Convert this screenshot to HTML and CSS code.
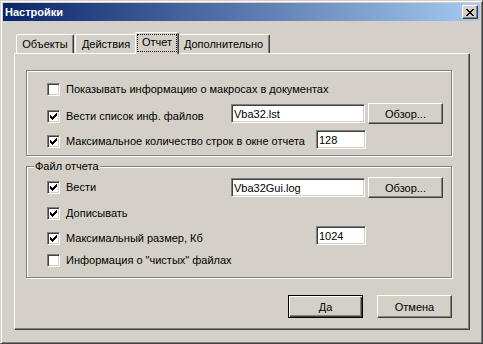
FILE: index.html
```html
<!DOCTYPE html>
<html lang="ru">
<head>
    <meta charset="UTF-8">
    <title>Настройки</title>
    <link rel="stylesheet" href="styles.css">
</head>
<body>
    <div class="window">
        <div class="titlebar">
            <span class="title">Настройки</span>
            <button class="close">
                <svg width="8" height="7" viewBox="0 0 8 7" shape-rendering="crispEdges">
                    <path d="M0 0h2v1H0zM6 0h2v1H6zM1 1h2v1H1zM5 1h2v1H5zM2 2h4v1H2zM3 3h2v1H3zM2 4h4v1H2zM1 5h2v1H1zM5 5h2v1H5zM0 6h2v1H0zM6 6h2v1H6z" fill="#000"/>
                </svg>
            </button>
        </div>

        <div class="client">
            <div class="tabs">
                <div class="tab tab-objects">Объекты</div>
                <div class="tab tab-actions">Действия</div>
                <div class="tab tab-active"><span class="focus">Отчет</span></div>
                <div class="tab tab-extra">Дополнительно</div>
            </div>

            <div class="panel">
                <!-- Общие настройки отчета -->
                <div class="group group-main">
                    <div class="row">
                        <label class="check-label">
                            <span class="check"></span>
                            Показывать информацию о макросах в документах
                        </label>
                    </div>
                    <div class="row row-field">
                        <label class="check-label label-file">
                            <span class="check"><svg width="7" height="7" viewBox="0 0 7 7" shape-rendering="crispEdges"><path d="M0 2h1v3H0zM1 3h1v3H1zM2 4h1v3H2zM3 3h1v3H3zM4 2h1v3H4zM5 1h1v3H5zM6 0h1v3H6z" fill="#000"/></svg></span>
                            Вести список инф. файлов
                        </label>
                        <input class="edit edit-file" type="text" value="Vba32.lst">
                        <button class="btn">Обзор...</button>
                    </div>
                    <div class="row row-number">
                        <label class="check-label label-number">
                            <span class="check"><svg width="7" height="7" viewBox="0 0 7 7" shape-rendering="crispEdges"><path d="M0 2h1v3H0zM1 3h1v3H1zM2 4h1v3H2zM3 3h1v3H3zM4 2h1v3H4zM5 1h1v3H5zM6 0h1v3H6z" fill="#000"/></svg></span>
                            Максимальное количество строк в окне отчета
                        </label>
                        <input class="edit edit-number" type="text" value="128">
                    </div>
                </div>

                <!-- Файл отчета -->
                <div class="group group-log">
                    <span class="group-title">Файл отчета</span>
                    <div class="row row-field">
                        <label class="check-label label-file">
                            <span class="check"><svg width="7" height="7" viewBox="0 0 7 7" shape-rendering="crispEdges"><path d="M0 2h1v3H0zM1 3h1v3H1zM2 4h1v3H2zM3 3h1v3H3zM4 2h1v3H4zM5 1h1v3H5zM6 0h1v3H6z" fill="#000"/></svg></span>
                            Вести
                        </label>
                        <input class="edit edit-file" type="text" value="Vba32Gui.log">
                        <button class="btn">Обзор...</button>
                    </div>
                    <div class="row row-plain">
                        <label class="check-label">
                            <span class="check"><svg width="7" height="7" viewBox="0 0 7 7" shape-rendering="crispEdges"><path d="M0 2h1v3H0zM1 3h1v3H1zM2 4h1v3H2zM3 3h1v3H3zM4 2h1v3H4zM5 1h1v3H5zM6 0h1v3H6z" fill="#000"/></svg></span>
                            Дописывать
                        </label>
                    </div>
                    <div class="row row-number">
                        <label class="check-label label-number">
                            <span class="check"><svg width="7" height="7" viewBox="0 0 7 7" shape-rendering="crispEdges"><path d="M0 2h1v3H0zM1 3h1v3H1zM2 4h1v3H2zM3 3h1v3H3zM4 2h1v3H4zM5 1h1v3H5zM6 0h1v3H6z" fill="#000"/></svg></span>
                            Максимальный размер, Кб
                        </label>
                        <input class="edit edit-number" type="text" value="1024">
                    </div>
                    <div class="row row-plain">
                        <label class="check-label">
                            <span class="check"></span>
                            Информация о "чистых" файлах
                        </label>
                    </div>
                </div>

                <div class="actions">
                    <button class="btn btn-default">Да</button>
                    <button class="btn">Отмена</button>
                </div>
            </div>
        </div>
    </div>
</body>
</html>
```

FILE: styles.css
```css
* {
    margin: 0;
    padding: 0;
    box-sizing: border-box;
    font-family: "Liberation Sans", Arial, sans-serif;
    font-size: 11px;
}

body {
    background: #D4D0C8;
    color: #000;
}

/* Окно диалога */
.window {
    width: 483px;
    height: 344px;
    padding: 2px;
    background: #D4D0C8;
    border: 1px solid;
    border-color: #D4D0C8 #404040 #404040 #D4D0C8;
    box-shadow: inset 1px 1px 0 #fff, inset -1px -1px 0 #808080;
    display: flex;
    flex-direction: column;
}

.titlebar {
    height: 18px;
    display: flex;
    align-items: center;
    background: linear-gradient(to right, #0A246A, #A6CAF0);
}

.title {
    color: #fff;
    font-weight: bold;
    padding-left: 2px;
}

.close {
    margin-left: auto;
    margin-right: 2px;
    width: 16px;
    height: 14px;
    background: #D4D0C8;
    border: 1px solid;
    border-color: #fff #404040 #404040 #fff;
    box-shadow: inset -1px -1px 0 #808080;
    display: flex;
    align-items: center;
    justify-content: center;
}

.client {
    flex: 1;
    padding: 11px 10px 11px 11px;
    display: flex;
    flex-direction: column;
}

/* Вкладки */
.tabs {
    height: 21px;
    display: flex;
    align-items: flex-end;
    padding-left: 2px;
}

.tab {
    height: 19px;
    padding-top: 3px;
    text-align: center;
    background: #D4D0C8;
    border-top: 1px solid #fff;
    border-left: 1px solid #fff;
    border-right: 1px solid #404040;
    border-radius: 2px 2px 0 0;
    box-shadow: inset -1px 0 0 #808080;
}

.tab-objects { width: 58px; margin-right: 1px; }
.tab-actions { width: 62px; }
.tab-extra { width: 93px; }

.tab-active {
    position: relative;
    z-index: 2;
    width: 44px;
    height: 22px;
    margin: 0 -2px -1px -2px;
    padding: 1px 1px 0 1px;
}

.focus {
    display: block;
    height: 18px;
    line-height: 15px;
    border: 1px dotted #000;
}

.panel {
    flex: 1;
    position: relative;
    z-index: 1;
    border: 1px solid;
    border-color: #fff #404040 #404040 #fff;
    box-shadow: inset -1px -1px 0 #808080;
    padding: 16px 17px 11px 11px;
    display: flex;
    flex-direction: column;
}

/* Группы */
.group {
    position: relative;
    border: 1px solid #808080;
    box-shadow: 1px 1px 0 #fff, inset 1px 1px 0 #fff;
    padding-left: 20px;
}

.group-main {
    height: 86px;
    padding-top: 12px;
}

.group-log {
    height: 112px;
    margin-top: 10px;
    padding-top: 10px;
}

.group-title {
    position: absolute;
    top: -7px;
    left: 7px;
    padding: 0 1px;
    line-height: 13px;
    background: #D4D0C8;
}

.row {
    display: flex;
    align-items: flex-start;
}

.row-field { margin-top: 7px; }
.row-number { margin-top: 6px; }
.row-plain { margin-top: 9px; }

.group-log .row-field { margin-top: 0; }

.check-label {
    display: flex;
    align-items: center;
    gap: 6px;
    height: 13px;
    line-height: 13px;
    white-space: nowrap;
}

.label-file {
    width: 184px;
    margin-top: 7px;
}

.group-log .label-file { margin-top: 4px; }

.label-number {
    width: 269px;
    margin-top: 5px;
}

.group-log .label-number { margin-top: 6px; }

.check {
    width: 13px;
    height: 13px;
    flex: none;
    background: #fff;
    border: 1px solid;
    border-color: #808080 #fff #fff #808080;
    box-shadow: inset 1px 1px 0 #404040, inset -1px -1px 0 #D4D0C8;
    display: flex;
    align-items: center;
    justify-content: center;
}

.edit {
    height: 19px;
    padding: 0 2px;
    background: #fff;
    border: 1px solid;
    border-color: #808080 #fff #fff #808080;
    box-shadow: inset 1px 1px 0 #404040, inset -1px -1px 0 #D4D0C8;
    outline: none;
}

.row-field .edit { margin-top: 1px; }

.edit-file { width: 134px; }
.edit-number { width: 50px; }

.btn {
    width: 75px;
    height: 21px;
    margin-left: 3px;
    background: #D4D0C8;
    border: 1px solid;
    border-color: #fff #404040 #404040 #fff;
    box-shadow: inset -1px -1px 0 #808080;
}

/* Кнопки диалога */
.actions {
    margin-top: 17px;
    display: flex;
    justify-content: flex-end;
    gap: 14px;
}

.actions .btn {
    height: 23px;
    margin-left: 0;
}

.btn-default {
    border-color: #000;
    box-shadow: inset 1px 1px 0 #fff, inset -1px -1px 0 #404040, inset -2px -2px 0 #808080;
}
```
